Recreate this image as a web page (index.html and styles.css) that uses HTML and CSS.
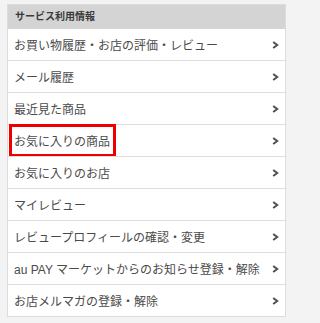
FILE: index.html
```html
<!DOCTYPE html>
<html lang="ja">
<head>
<meta charset="utf-8">
<meta name="viewport" content="width=device-width, initial-scale=1">
<link rel="stylesheet" href="styles.css">
</head>
<body>
<div class="panel">
  <div class="panel-head">サービス利用情報</div>
  <ul class="menu">
    <li class="item"><span class="label">お買い物履歴・お店の評価・レビュー</span><svg class="chev" viewBox="0 0 7 8"><polyline points="1.2,1 5.2,4 1.2,7"/></svg></li>
    <li class="item"><span class="label">メール履歴</span><svg class="chev" viewBox="0 0 7 8"><polyline points="1.2,1 5.2,4 1.2,7"/></svg></li>
    <li class="item"><span class="label">最近見た商品</span><svg class="chev" viewBox="0 0 7 8"><polyline points="1.2,1 5.2,4 1.2,7"/></svg></li>
    <li class="item highlighted"><span class="label">お気に入りの商品</span><svg class="chev" viewBox="0 0 7 8"><polyline points="1.2,1 5.2,4 1.2,7"/></svg><span class="mark"></span></li>
    <li class="item"><span class="label">お気に入りのお店</span><svg class="chev" viewBox="0 0 7 8"><polyline points="1.2,1 5.2,4 1.2,7"/></svg></li>
    <li class="item"><span class="label">マイレビュー</span><svg class="chev" viewBox="0 0 7 8"><polyline points="1.2,1 5.2,4 1.2,7"/></svg></li>
    <li class="item"><span class="label">レビュープロフィールの確認・変更</span><svg class="chev" viewBox="0 0 7 8"><polyline points="1.2,1 5.2,4 1.2,7"/></svg></li>
    <li class="item"><span class="label">au PAY マーケットからのお知らせ登録・解除</span><svg class="chev" viewBox="0 0 7 8"><polyline points="1.2,1 5.2,4 1.2,7"/></svg></li>
    <li class="item"><span class="label">お店メルマガの登録・解除</span><svg class="chev" viewBox="0 0 7 8"><polyline points="1.2,1 5.2,4 1.2,7"/></svg></li>
  </ul>
</div>
</body>
</html>
```
FILE: styles.css
```css
html, body {
  margin: 0;
  padding: 0;
  background: #f3f3f3;
  -webkit-text-size-adjust: 100%;
  text-size-adjust: 100%;
}
body {
  padding: 4px 7px 0 7px;
  font-family: "Liberation Sans", "Noto Sans CJK JP", sans-serif;
}
.panel {
  box-sizing: border-box;
  width: 279px;
  background: #fff;
  border: 1px solid #dcdcdc;
}
.panel-head {
  background: #d4d4d4;
  color: #3a3a3a;
  font-size: 10px;
  font-weight: bold;
  height: 24px;
  line-height: 24px;
  padding-left: 7px;
}
.menu {
  list-style: none;
  margin: 0;
  padding: 0;
}
.item {
  position: relative;
  display: flex;
  align-items: center;
  justify-content: space-between;
  height: 31px;
  padding: 0 6px 0 6px;
  border-top: 1px solid #dedede;
  color: #4a4a4a;
  font-size: 12px;
}
.item:first-child {
  border-top: none;
}
.label {
  white-space: nowrap;
}
.chev {
  width: 7px;
  height: 8px;
  flex: none;
}
.chev polyline {
  fill: none;
  stroke: #505050;
  stroke-width: 2;
}
.mark {
  position: absolute;
  left: 1px;
  top: -1px;
  width: 101px;
  height: 27px;
  border: 3px solid #ee0000;
}
```
